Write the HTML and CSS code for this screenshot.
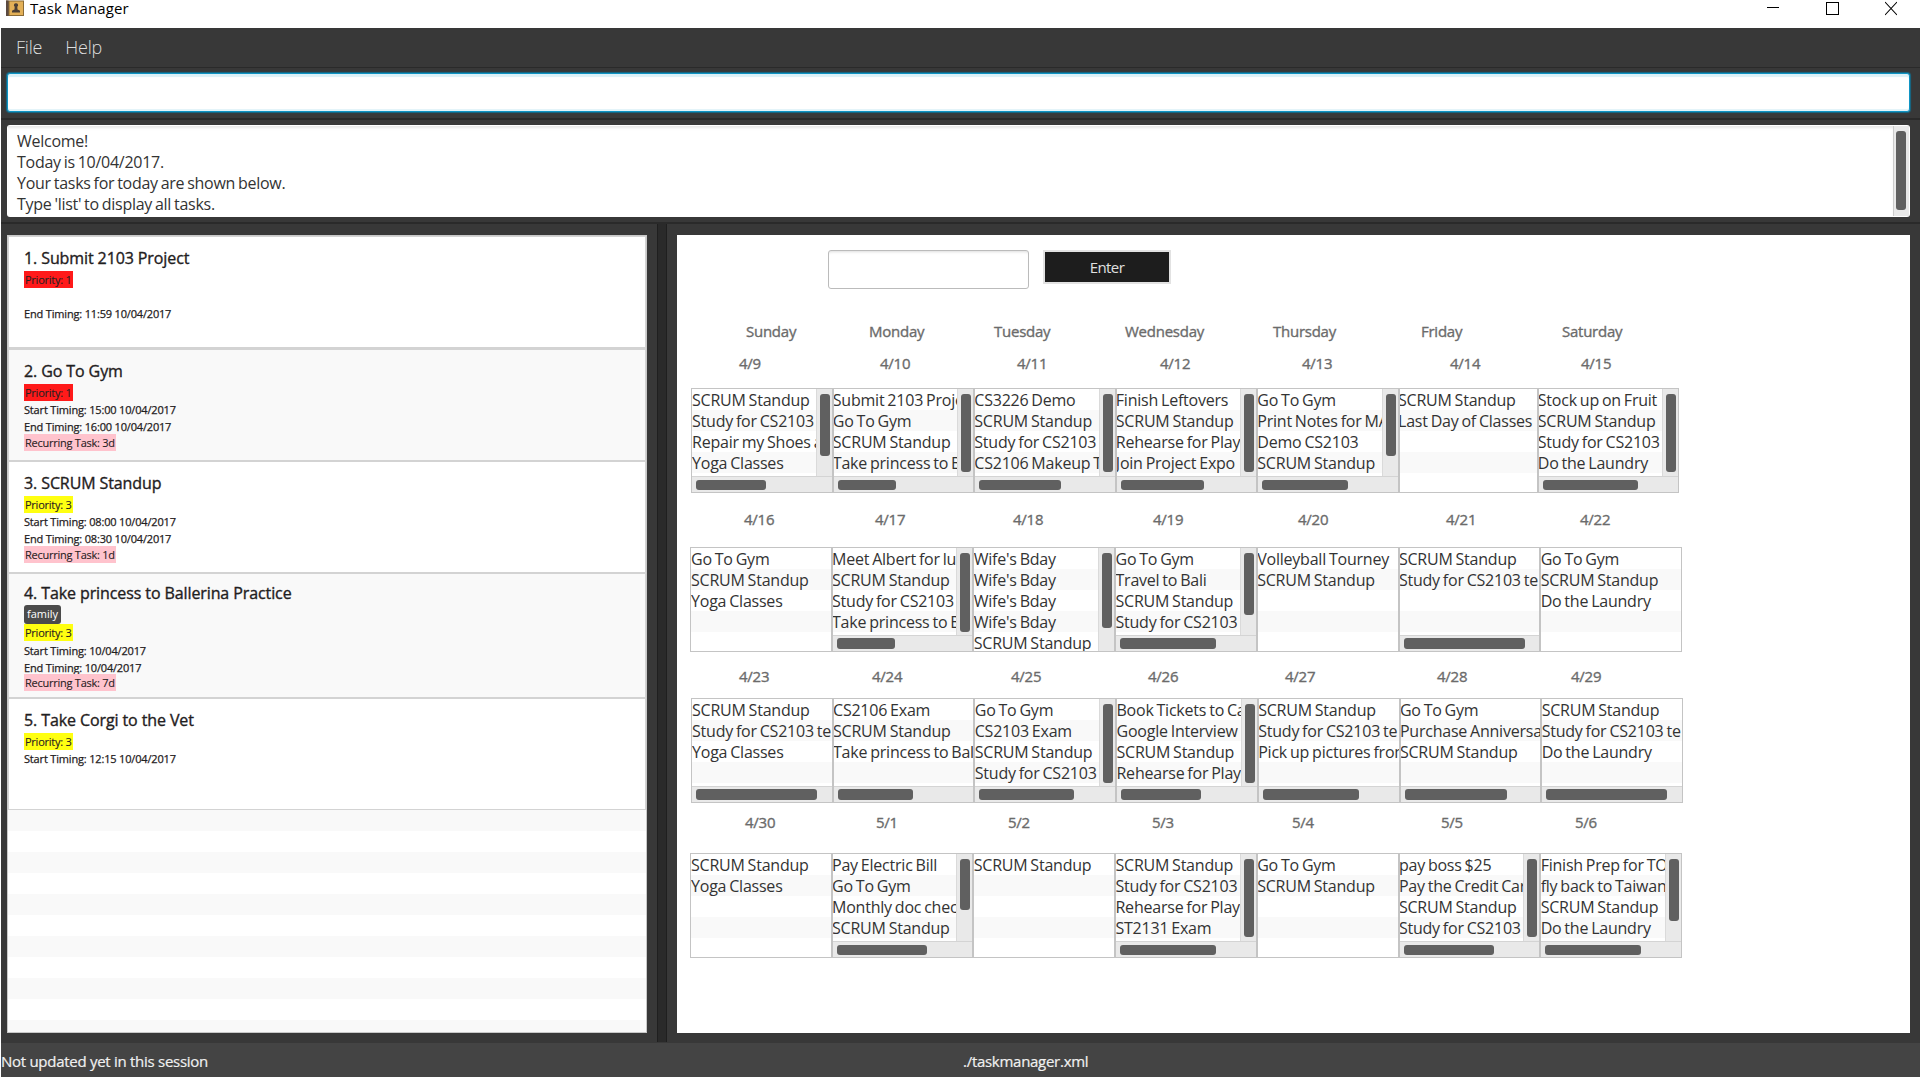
FILE: index.html
```html
<!DOCTYPE html>
<html lang="en">
<head>
<meta charset="utf-8">
<title>Task Manager</title>
<link rel="stylesheet" href="styles.css">
</head>
<body>
<div class="window">
  <header class="titlebar">
    <svg class="app-icon" width="18" height="17" viewBox="0 0 18 17"><rect x="0" y="0.5" width="18" height="15.5" fill="#8a6a35"/><rect x="3.5" y="1.5" width="13.5" height="13.5" fill="#e3b057"/><rect x="0" y="0.5" width="2.5" height="15.5" fill="#5b4a42"/><path d="M10 3.2a2 2 0 0 1 1.300 3.600L11.500 9.500Q14 10 14 11V12.600H6V11Q6 10 8.500 9.500L8.700 6.800A2 2 0 0 1 10 3.200Z" fill="#4c3f35"/></svg>
    <span class="app-title">Task Manager</span>
    <div class="controls">
      <svg width="12" height="16" viewBox="0 0 12 16"><path d="M0 7.500H12" stroke="#000"/></svg>
      <svg width="13" height="16" viewBox="0 0 13 16"><rect x=".5" y="2.500" width="12" height="12" fill="none" stroke="#000"/></svg>
      <svg width="12" height="16" viewBox="0 0 12 16"><path d="M0 2L12 15M12 2L0 15" stroke="#000" stroke-width="1.100"/></svg>
    </div>
  </header>
  <nav class="menubar"><span class="m-file">File</span><span class="m-help">Help</span></nav>
  <div class="command"><div class="command-field"></div></div>
  <div class="result">
    <div class="result-box">
      <div class="result-text">Welcome!<br>Today is 10/04/2017.<br>Your tasks for today are shown below.<br>Type 'list' to display all tasks.</div>
      <div class="result-scroll"><i></i></div>
    </div>
  </div>
  <main class="split">
    <section class="tasks">
      <article class="card first"><h2>1. Submit 2103 Project</h2><p><b class="red">Priority: 1</b></p><p></p><p>End Timing: 11:59 10/04/2017</p></article>
      <article class="card alt"><h2>2. Go To Gym</h2><p><b class="red">Priority: 1</b></p><p>Start Timing: 15:00 10/04/2017</p><p>End Timing: 16:00 10/04/2017</p><p><b class="pink">Recurring Task: 3d</b></p></article>
      <article class="card"><h2>3. SCRUM Standup</h2><p><b class="yellow">Priority: 3</b></p><p>Start Timing: 08:00 10/04/2017</p><p>End Timing: 08:30 10/04/2017</p><p><b class="pink">Recurring Task: 1d</b></p></article>
      <article class="card alt tall"><h2>4. Take princess to Ballerina Practice</h2><div class="tag">family</div><p><b class="yellow">Priority: 3</b></p><p>Start Timing: 10/04/2017</p><p>End Timing: 10/04/2017</p><p><b class="pink">Recurring Task: 7d</b></p></article>
      <article class="card last"><h2>5. Take Corgi to the Vet</h2><p><b class="yellow">Priority: 3</b></p><p>Start Timing: 12:15 10/04/2017</p></article>
      <div class="empty-rows"></div>
    </section>
    <div class="divider"></div>
    <section class="calendar">
      <div class="search"><div class="search-field"></div><button class="enter">Enter</button></div>
      <div class="labels days"><span>Sunday</span><span>Monday</span><span>Tuesday</span><span>Wednesday</span><span>Thursday</span><span>Friday</span><span>Saturday</span></div>
      <div class="labels d1"><span>4/9</span><span>4/10</span><span>4/11</span><span>4/12</span><span>4/13</span><span>4/14</span><span>4/15</span></div>
      <div class="week w1">
        <div class="cell v h"><ul><li>SCRUM Standup</li><li>Study for CS2103</li><li>Repair my Shoes a</li><li>Yoga Classes</li></ul><div class="vs"><i style="height:62px"></i></div><div class="hs"><i style="width:70px"></i></div></div>
        <div class="cell v h"><ul><li>Submit 2103 Proje</li><li>Go To Gym</li><li>SCRUM Standup</li><li>Take princess to B</li></ul><div class="vs"><i style="height:78px"></i></div><div class="hs"><i style="width:58px"></i></div></div>
        <div class="cell v h"><ul><li>CS3226 Demo</li><li>SCRUM Standup</li><li>Study for CS2103</li><li>CS2106 Makeup T</li></ul><div class="vs"><i style="height:78px"></i></div><div class="hs"><i style="width:82px"></i></div></div>
        <div class="cell v h"><ul><li>Finish Leftovers</li><li>SCRUM Standup</li><li>Rehearse for Play</li><li>Join Project Expo</li></ul><div class="vs"><i style="height:78px"></i></div><div class="hs"><i style="width:83px"></i></div></div>
        <div class="cell v h"><ul><li>Go To Gym</li><li>Print Notes for MA</li><li>Demo CS2103</li><li>SCRUM Standup</li></ul><div class="vs"><i style="height:62px"></i></div><div class="hs"><i style="width:86px"></i></div></div>
        <div class="cell narrow"><ul><li>SCRUM Standup</li><li>Last Day of Classes</li></ul></div>
        <div class="cell v h"><ul><li>Stock up on Fruit</li><li>SCRUM Standup</li><li>Study for CS2103</li><li>Do the Laundry</li></ul><div class="vs"><i style="height:78px"></i></div><div class="hs"><i style="width:95px"></i></div></div>
      </div>
      <div class="labels d2"><span>4/16</span><span>4/17</span><span>4/18</span><span>4/19</span><span>4/20</span><span>4/21</span><span>4/22</span></div>
      <div class="week w2">
        <div class="cell"><ul><li>Go To Gym</li><li>SCRUM Standup</li><li>Yoga Classes</li></ul></div>
        <div class="cell v h"><ul><li>Meet Albert for lu</li><li>SCRUM Standup</li><li>Study for CS2103</li><li>Take princess to B</li></ul><div class="vs"><i style="height:79px"></i></div><div class="hs"><i style="width:58px"></i></div></div>
        <div class="cell v"><ul><li>Wife's Bday</li><li>Wife's Bday</li><li>Wife's Bday</li><li>Wife's Bday</li><li>SCRUM Standup</li></ul><div class="vs"><i style="height:75px"></i></div></div>
        <div class="cell v h"><ul><li>Go To Gym</li><li>Travel to Bali</li><li>SCRUM Standup</li><li>Study for CS2103</li></ul><div class="vs"><i style="height:62px"></i></div><div class="hs"><i style="width:96px"></i></div></div>
        <div class="cell"><ul><li>Volleyball Tourney</li><li>SCRUM Standup</li></ul></div>
        <div class="cell h"><ul><li>SCRUM Standup</li><li>Study for CS2103 te</li></ul><div class="hs"><i style="width:121px"></i></div></div>
        <div class="cell"><ul><li>Go To Gym</li><li>SCRUM Standup</li><li>Do the Laundry</li></ul></div>
      </div>
      <div class="labels d3"><span>4/23</span><span>4/24</span><span>4/25</span><span>4/26</span><span>4/27</span><span>4/28</span><span>4/29</span></div>
      <div class="week w3">
        <div class="cell h"><ul><li>SCRUM Standup</li><li>Study for CS2103 te</li><li>Yoga Classes</li></ul><div class="hs"><i style="width:121px"></i></div></div>
        <div class="cell h"><ul><li>CS2106 Exam</li><li>SCRUM Standup</li><li>Take princess to Bal</li></ul><div class="hs"><i style="width:75px"></i></div></div>
        <div class="cell v h"><ul><li>Go To Gym</li><li>CS2103 Exam</li><li>SCRUM Standup</li><li>Study for CS2103</li></ul><div class="vs"><i style="height:79px"></i></div><div class="hs"><i style="width:95px"></i></div></div>
        <div class="cell v h"><ul><li>Book Tickets to Ca</li><li>Google Interview</li><li>SCRUM Standup</li><li>Rehearse for Play</li></ul><div class="vs"><i style="height:79px"></i></div><div class="hs"><i style="width:80px"></i></div></div>
        <div class="cell h"><ul><li>SCRUM Standup</li><li>Study for CS2103 te</li><li>Pick up pictures from</li></ul><div class="hs"><i style="width:96px"></i></div></div>
        <div class="cell h"><ul><li>Go To Gym</li><li>Purchase Anniversar</li><li>SCRUM Standup</li></ul><div class="hs"><i style="width:102px"></i></div></div>
        <div class="cell h"><ul><li>SCRUM Standup</li><li>Study for CS2103 te</li><li>Do the Laundry</li></ul><div class="hs"><i style="width:121px"></i></div></div>
      </div>
      <div class="labels d4"><span>4/30</span><span>5/1</span><span>5/2</span><span>5/3</span><span>5/4</span><span>5/5</span><span>5/6</span></div>
      <div class="week w4">
        <div class="cell"><ul><li>SCRUM Standup</li><li>Yoga Classes</li></ul></div>
        <div class="cell v h"><ul><li>Pay Electric Bill</li><li>Go To Gym</li><li>Monthly doc chec</li><li>SCRUM Standup</li></ul><div class="vs"><i style="height:51px"></i></div><div class="hs"><i style="width:90px"></i></div></div>
        <div class="cell"><ul><li>SCRUM Standup</li></ul></div>
        <div class="cell v h"><ul><li>SCRUM Standup</li><li>Study for CS2103</li><li>Rehearse for Play</li><li>ST2131 Exam</li></ul><div class="vs"><i style="height:78px"></i></div><div class="hs"><i style="width:96px"></i></div></div>
        <div class="cell"><ul><li>Go To Gym</li><li>SCRUM Standup</li></ul></div>
        <div class="cell v h"><ul><li>pay boss $25</li><li>Pay the Credit Car</li><li>SCRUM Standup</li><li>Study for CS2103</li></ul><div class="vs"><i style="height:78px"></i></div><div class="hs"><i style="width:90px"></i></div></div>
        <div class="cell v h"><ul><li>Finish Prep for TO</li><li>fly back to Taiwan</li><li>SCRUM Standup</li><li>Do the Laundry</li></ul><div class="vs"><i style="height:62px"></i></div><div class="hs"><i style="width:96px"></i></div></div>
      </div>
    </section>
  </main>
  <footer class="status"><span>Not updated yet in this session</span><span>./taskmanager.xml</span></footer>
</div>
</body>
</html>
```
FILE: styles.css
```css
* { box-sizing: border-box; margin: 0; padding: 0; }
body { width: 1920px; height: 1080px; overflow: hidden; background: #fff; font-family: "Open Sans", "Noto Sans", sans-serif; color: #333; font-size: 16px; }
.window { display: flex; flex-direction: column; height: 1077px; padding-left: 1px; }

.titlebar { display: flex; height: 28px; padding-left: 5px; align-items: flex-start; }
.app-icon { margin-right: 6px; }
.app-title { color: #000; font-size: 15px; line-height: 16px; letter-spacing: 0.1px; }
.controls { display: flex; gap: 46.500px; margin-left: auto; padding-right: 23px; }

.menubar { display: flex; height: 40px; padding-left: 15px; gap: 23px; background: #383838; border-bottom: 1px solid #2a2a2a; color: #dedede; font-size: 18px; line-height: 39px; font-weight: 300; letter-spacing: -0.2px; }
.command { height: 52px; padding: 5px 10px 0 6px; background: #383838; border-bottom: 2px solid #2a2a2a; }
.command-field { height: 39px; background: #fff; border: 1px solid #0f94c4; border-radius: 3px; box-shadow: 0 0 1px 1px #166a88, inset 0 3px 1px #dcf1f8, inset 0 -2px 0 #e4f4f9; }
.result { height: 104px; padding: 5px 10px 0 6px; background: #383838; border-bottom: 2px solid #2a2a2a; }
.result-box { display: flex; height: 92px; padding: 1px; background: #fff; border-radius: 3px; }
.result-text { flex: 1; padding: 5px 0 0 9px; line-height: 21px; letter-spacing: -0.27px; word-spacing: -1px; box-shadow: inset 0 3px 3px -1px #e6e6e6; }
.result-scroll { width: 16px; padding: 5px 3px 5px 2px; background: #e9e9e9; border-left: 1px solid #ccc; }
.result-scroll i { display: block; width: 10px; height: 79px; border-radius: 3px; background: #606060; }

.split { display: flex; height: 819px; padding-left: 6px; background: #383838; }
.tasks { width: 640px; height: 798px; margin-top: 11px; background: #fff; border: 1px solid #c8c8c8; display: flex; flex-direction: column; overflow: hidden; }
.card { height: 112px; padding: 9px 0 0 15px; border: 1px solid #d3d3d3; border-width: 0 1px 2px; color: #1f2021; background: #fff; }
.card.first { height: 114px; border-width: 1px 1px 3px; }
.card.alt { background: #f9f9f9; }
.card.tall { height: 125px; padding-top: 7px; }
.card.last { height: 111px; border-bottom-width: 1px; }
.card h2 { height: 24.500px; font-size: 16px; font-weight: 400; line-height: 24px; letter-spacing: -0.1px; -webkit-text-stroke: .35px #1f2021; }
.card.tall h2 { height: 24px; }
.card p { height: 16.800px; font-size: 11px; line-height: 19px; letter-spacing: -0.17px; -webkit-text-stroke: .25px #1f2021; }
.card b { display: inline-block; height: 17px; padding: 0 1px; font-weight: 400; line-height: 17px; vertical-align: top; letter-spacing: -0.25px; -webkit-text-stroke: .1px #1f2021; }
.red { background: #ff1a1a; }
.yellow { background: #ff1; }
.pink { background: #ffc3cd; }
.tag { width: 37px; height: 19px; border-radius: 3px; background: #4b4b4b; color: #fff; font-size: 11px; line-height: 18px; text-align: center; }
.empty-rows { flex: 1; background: repeating-linear-gradient(#f9f9f9 0 21px, #fff 21px 42px); }
.divider { width: 10px; height: 818px; margin-left: 10px; background: #2a2a2a; border: 1px solid #1f1f1f; border-top: 0; border-bottom: 0; }

.calendar { width: 1233px; height: 798px; margin: 11px 0 0 10px; background: #fff; display: flex; flex-direction: column; }
.search { display: flex; gap: 14px; padding: 15px 0 0 151px; height: 86px; }
.search-field { width: 201px; height: 39px; border: 1px solid #bbb; border-radius: 3px; box-shadow: inset 0 3px 3px -2px #ddd; }
.enter { width: 128px; height: 34px; border: 2px solid #e2e2e2; background: #1d1d1d; color: #e0e0e0; font: 400 15px "Open Sans", sans-serif; letter-spacing: -0.6px; }
.labels { display: grid; height: 21px; color: #6b6b6b; font-size: 15px; line-height: 21px; letter-spacing: -0.25px; -webkit-text-stroke: .35px #6b6b6b; }
.days { padding-left: 69px; grid-template-columns: 123px 125px 131px 148px 148px 141px 90px; }
.d1 { margin-top: 11px; padding-left: 62px; grid-template-columns: 141px 137px 143px 142px 148px 131px 60px; }
.d2 { margin-top: 16px; padding-left: 67px; grid-template-columns: 131px 138px 140px 145px 148px 134px 60px; }
.d3 { margin-top: 14px; padding-left: 62px; grid-template-columns: 133px 139px 137px 137px 152px 134px 60px; }
.d4 { margin-top: 9px; padding-left: 68px; grid-template-columns: 131px 132px 144px 140px 149px 134px 60px; }

.week { display: flex; height: 105px; }
.w1 { margin: 14px 0 0 14px; width: 988px; }
.w2 { margin: 17px 0 0 13px; width: 992px; }
.w3 { margin: 11px 0 0 14px; width: 992px; }
.w4 { margin: 20px 0 0 13px; width: 992px; }
.cell { flex: 1; min-width: 0; display: grid; grid-template: 1fr / minmax(0, 1fr); border: 1px solid #c4c4c4; }
.cell.narrow { flex: 0 0 139px; }
.cell.v { grid-template-columns: minmax(0, 1fr) 16px; }
.cell.h { grid-template-rows: minmax(0, 1fr) 16px; }
.cell ul { min-height: 0; list-style: none; overflow: hidden; background: repeating-linear-gradient(#fff 0 21px, #f9f9f9 21px 42px); }
.cell li { height: 21px; line-height: 22px; white-space: nowrap; letter-spacing: -0.22px; word-spacing: -1px; }
.cell + .cell li { margin-left: -0.7px; }
.cell.narrow li { margin-left: -1.500px; }
.w1 li, .w4 li { line-height: 23px; }
.vs { padding: 5px 0 0 3px; background: #e9e9e9; border-left: 1px solid #dadada; }
.vs i { display: block; width: 10px; border-radius: 3px; background: #606060; }
.hs { grid-column: 1 / -1; padding: 2px 0 0 4px; background: #e9e9e9; border-top: 1px solid #d4d4d4; }
.hs i { display: block; height: 11px; border-radius: 3px; background: #606060; }
.w1 .hs, .w4 .hs { padding-top: 3px; }
.w1 .hs i, .w4 .hs i { height: 10px; }

.status { display: grid; grid-template-columns: 962px 1fr; height: 34px; background: #444; color: #f0f0f0; font-size: 15px; line-height: 37px; letter-spacing: -0.28px; -webkit-text-stroke: .2px #f0f0f0; }
```
